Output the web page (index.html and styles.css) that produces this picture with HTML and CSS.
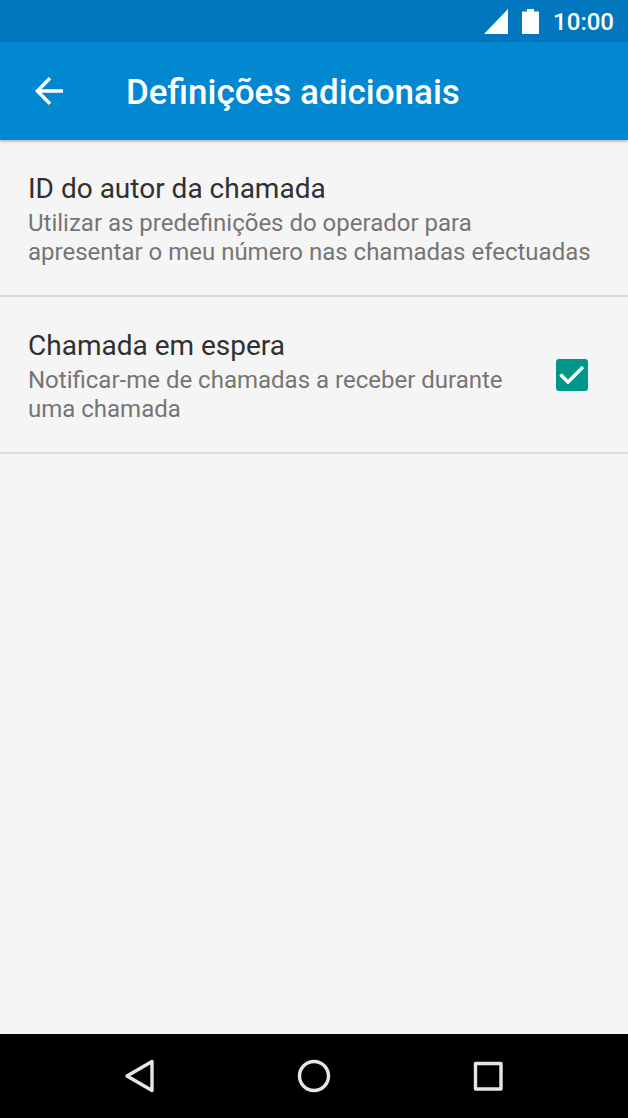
FILE: index.html
```html
<!DOCTYPE html>
<html lang="pt">
<head>
    <meta charset="UTF-8">
    <meta name="viewport" content="width=device-width, initial-scale=1.0">
    <title>Definições adicionais</title>
    <link rel="stylesheet" href="styles.css">
</head>
<body>
    <div class="status-bar">
        <svg class="signal" width="25" height="25" viewBox="0 0 25 25" aria-hidden="true">
            <path d="M1 25L25 0V25Z" fill="#fff"/>
        </svg>
        <svg class="battery" width="17" height="25" viewBox="0 0 17 25" aria-hidden="true">
            <path d="M5 0H12V2.500H16.500Q17 2.500 17 3V24.500Q17 25 16.500 25H.500Q0 25 0 24.500V3Q0 2.500 .500 2.500H5Z" fill="#fff"/>
        </svg>
        <span class="clock">10:00</span>
    </div>

    <header class="toolbar">
        <button class="back" type="button" aria-label="Voltar">
            <svg width="28" height="28" viewBox="0 0 28 28">
                <path d="M28 14H2.500M15 1.300L2.300 14L15 26.700" fill="none" stroke="#fff" stroke-width="3.400"/>
            </svg>
        </button>
        <h1>Definições adicionais</h1>
    </header>

    <main>
        <div class="setting">
            <div class="setting-text">
                <h2>ID do autor da chamada</h2>
                <p>Utilizar as predefinições do operador para<br>apresentar o meu número nas chamadas efectuadas</p>
            </div>
        </div>
        <div class="setting with-check">
            <label class="setting-text" for="callWaiting">
                <span class="title">Chamada em espera</span>
                <span class="summary">Notificar-me de chamadas a receber durante uma chamada</span>
            </label>
            <span class="checkbox">
                <input type="checkbox" id="callWaiting" checked>
                <svg width="32" height="32" viewBox="0 0 32 32" aria-hidden="true">
                    <path d="M4.500 15.500L12 23L27 8" fill="none" stroke="#fff" stroke-width="3.400"/>
                </svg>
            </span>
        </div>
    </main>

    <nav class="nav-bar">
        <button type="button" aria-label="Anterior">
            <svg width="36" height="36" viewBox="0 0 36 36">
                <path d="M5 18L30 3.500V32.500Z" fill="none" stroke="#e6e6e6" stroke-width="3.400" stroke-linejoin="round"/>
            </svg>
        </button>
        <button type="button" aria-label="Início">
            <svg width="36" height="36" viewBox="0 0 36 36">
                <circle cx="18" cy="18" r="14.500" fill="none" stroke="#e6e6e6" stroke-width="3.400"/>
            </svg>
        </button>
        <button type="button" aria-label="Recentes">
            <svg width="36" height="36" viewBox="0 0 36 36">
                <rect x="5.500" y="5.500" width="25.500" height="25.500" fill="none" stroke="#e6e6e6" stroke-width="3.400" stroke-linejoin="round"/>
            </svg>
        </button>
    </nav>
</body>
</html>
```

FILE: styles.css
```css
* {
    box-sizing: border-box;
}

body {
    font-family: Roboto, sans-serif;
    background-color: #f5f5f5;
    color: #303030;
    display: flex;
    flex-direction: column;
    min-height: 100vh;
    margin: 0;
}

h1, h2, p {
    margin: 0;
}

button {
    background: none;
    border: none;
    padding: 0;
    cursor: pointer;
}

svg {
    display: block;
}

.status-bar {
    display: flex;
    justify-content: flex-end;
    align-items: center;
    gap: 14px;
    height: 42px;
    padding: 0 14px;
    background-color: #0277bd;
    color: #fff;
}

.clock {
    padding-top: 2px;
    font-size: 24px;
    font-weight: 500;
    line-height: 28px;
}

.toolbar {
    display: flex;
    align-items: center;
    height: 98px;
    padding: 0 28px;
    background-color: #0288d1;
    color: #fff;
    box-shadow: 0 1px 3px rgba(0, 0, 0, 0.35);
}

.back {
    display: flex;
    justify-content: center;
    align-items: center;
    width: 42px;
    height: 42px;
    margin-right: 56px;
}

h1 {
    padding-top: 4px;
    font-size: 35px;
    font-weight: 500;
    line-height: 42px;
}

main {
    flex: 1;
}

.setting {
    display: flex;
    align-items: center;
    padding: 28px;
    border-bottom: 2px solid #dadada;
}

.with-check {
    gap: 40px;
    padding-right: 40px;
}

.setting-text {
    flex: 1;
}

h2, .title {
    display: block;
    font-size: 28px;
    font-weight: 400;
    line-height: 41px;
}

p, .summary {
    display: block;
    color: #757575;
    font-size: 24px;
    line-height: 29px;
}

.checkbox {
    position: relative;
    width: 32px;
    height: 32px;
}

.checkbox input {
    appearance: none;
    display: block;
    width: 32px;
    height: 32px;
    margin: 0;
    border: 3px solid #757575;
    border-radius: 3px;
}

.checkbox input:checked {
    background-color: #009688;
    border-color: #009688;
}

.checkbox svg {
    position: absolute;
    top: 0;
    left: 0;
    pointer-events: none;
}

.nav-bar {
    display: flex;
    height: 84px;
    padding: 0 53px;
    background-color: #000;
}

.nav-bar button {
    display: flex;
    flex: 1;
    justify-content: center;
    align-items: center;
}
```
